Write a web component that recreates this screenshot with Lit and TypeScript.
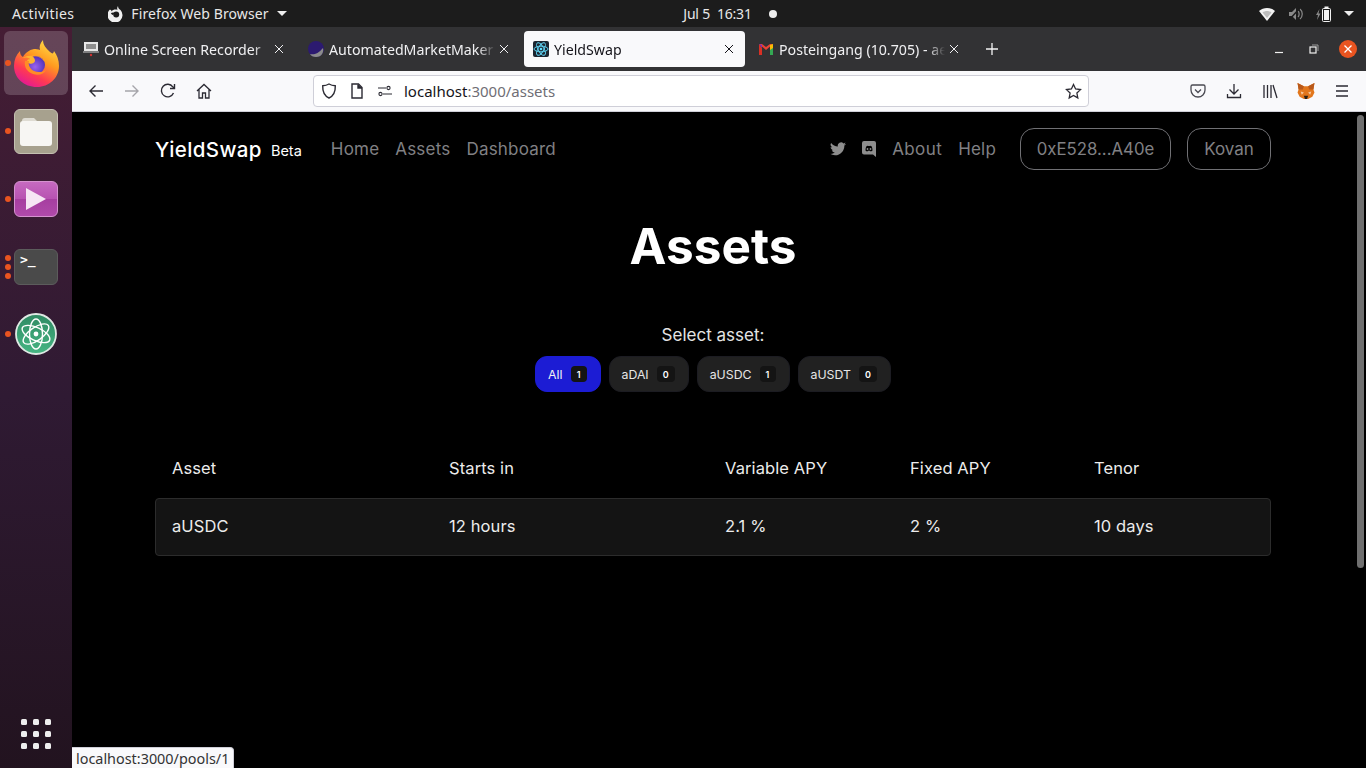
import {LitElement, html, css, svg} from 'lit';
import {customElement} from 'lit/decorators.js';

const assetPills = [
  {label: 'All', count: 1, active: true},
  {label: 'aDAI', count: 0},
  {label: 'aUSDC', count: 1},
  {label: 'aUSDT', count: 0},
];

const columns = ['Asset', 'Starts in', 'Variable APY', 'Fixed APY', 'Tenor'];
const row = ['aUSDC', '12 hours', '2.1 %', '2 %', '10 days'];

const closeIcon = html`<svg class="tab-close" width="10" height="10" viewBox="0 0 10 10"><path d="M1 1l8 8M9 1l-8 8" stroke="currentColor" stroke-width="1" fill="none"/></svg>`;

const firefoxLogo = svg`
  <defs>
    <linearGradient id="ffa" x1="0.8" y1="0" x2="0.25" y2="1"><stop offset="0" stop-color="#ffe14a"/><stop offset="0.4" stop-color="#ff9a1f"/><stop offset="0.72" stop-color="#ff3a52"/><stop offset="1" stop-color="#e0169a"/></linearGradient>
    <radialGradient id="ffb" cx="0.45" cy="0.6" r="0.65"><stop offset="0" stop-color="#9a63ee"/><stop offset="1" stop-color="#4a2cb0"/></radialGradient>
  </defs>
  <path d="M30 0c0 5 3 8 7 12 2 1 3 3 4-1 3 4 5 9 5 15 0 12-10 21-22 21C11 47 1 38 1 26c0-6 2-11 6-15 0 3 1 5 3 6 2-4 6-7 11-8 2 0 4 0 6 1-1-3 0-7 3-10z" fill="url(#ffa)"/>
  <circle cx="23" cy="25" r="9" fill="url(#ffb)"/>
  <path d="M6 20c4-3 8-3 11-1-2 0-3 1-3 3 3 3 7 2 8-1 0-2-1-4-3-5 6-1 11 2 13 7-2-4-6-7-11-7-6-1-11 1-15 4z" fill="#ffb52e"/>
  <path d="M12 21c-1 6 2 11 8 13 6 2 11 0 13-4-3 2-8 3-12 1-4-2-6-6-5-10z" fill="#ff8c26"/>
`;

const atomLines = svg`
  <g fill="none" stroke="#fff" stroke-width="1.4">
    <ellipse cx="21" cy="21" rx="15" ry="6.500" transform="rotate(25 21 21)"/>
    <ellipse cx="21" cy="21" rx="15" ry="6.500" transform="rotate(-35 21 21)"/>
    <ellipse cx="21" cy="21" rx="15" ry="6.500" transform="rotate(90 21 21)"/>
  </g>
  <circle cx="21" cy="21" r="2.400" fill="#fff"/>
`;

@customElement('app-root')
export class AppRoot extends LitElement {
  static styles = css`
    :host {
      display: block;
      width: 1366px;
      height: 768px;
      overflow: hidden;
      position: relative;
      font-family: "Noto Sans", "Open Sans", sans-serif;
      background: #000;
    }

    /* Ubuntu top bar */

    .topbar {
      height: 27px;
      background: #1c1c1c;
      color: #e8e8e8;
      font-size: 14px;
      display: grid;
      grid-template-columns: 1fr auto 1fr;
      align-items: center;
      padding: 0 12px;
      box-sizing: border-box;
    }

    .topbar-left, .topbar-right {
      display: flex;
      align-items: center;
    }

    .topbar-right {
      justify-content: flex-end;
      gap: 12px;
    }

    .activities {
      letter-spacing: 0.4px;
    }

    .app-menu {
      display: flex;
      align-items: center;
      gap: 7px;
      margin-left: 34px;
      letter-spacing: 0.1px;
    }

    .caret {
      width: 0;
      height: 0;
      border-left: 5px solid transparent;
      border-right: 5px solid transparent;
      border-top: 5px solid #eee;
      margin-left: 1px;
    }

    .clock {
      display: flex;
      align-items: center;
      gap: 17px;
      letter-spacing: -0.2px;
      margin-left: 94px;
    }

    .clock i {
      width: 8px;
      height: 8px;
      border-radius: 50%;
      background: #eee;
    }

    .shell {
      display: flex;
      height: 741px;
    }

    /* Dock */

    .dock {
      width: 72px;
      flex: none;
      background: linear-gradient(180deg, #451d34 0%, #2f1a33 50%, #22131f 100%);
      display: flex;
      flex-direction: column;
      align-items: center;
      padding-top: 4px;
      box-sizing: border-box;
    }

    .dock-item {
      width: 64px;
      height: 64px;
      display: flex;
      align-items: center;
      justify-content: center;
      position: relative;
      border-radius: 6px;
      margin-bottom: 4px;
    }

    .dock-item.current {
      background: rgba(255, 255, 255, 0.18);
    }

    .dock-files {
      height: 50px;
      margin: 7px 0 12px;
    }

    .dock-video {
      height: 36px;
      margin: 13px 0 16px;
    }

    .dock-terminal {
      height: 36px;
      margin: 16px 0 0;
    }

    .dock-atom {
      height: 44px;
      margin: 27px 0 0;
    }

    .pips {
      position: absolute;
      left: 1px;
      top: 50%;
      transform: translateY(-50%);
      display: flex;
      flex-direction: column;
      gap: 3px;
    }

    .pips i {
      width: 6px;
      height: 6px;
      border-radius: 50%;
      background: #e95420;
    }

    .app-tile {
      width: 44px;
      border-radius: 6px;
      position: relative;
      box-sizing: border-box;
    }

    .files {
      height: 45px;
      background: #a7a18e;
      display: flex;
      align-items: center;
      justify-content: center;
      border: 1px solid #c4c0b1;
    }

    .video {
      height: 36px;
      background: linear-gradient(180deg, #c66ac0 0%, #b752b1 50%, #a63ea0 50%, #b04aaa 100%);
      border: 1px solid #d592cf;
      display: flex;
      align-items: center;
      justify-content: center;
    }

    .terminal {
      height: 36px;
      background: #4a4a4a;
      border: 1px solid #5c5c5c;
      color: #fff;
      font: 700 13px/1 "DejaVu Sans Mono", monospace;
      padding: 3px 0 0 5px;
    }

    .dock-grid {
      margin-top: auto;
      margin-bottom: 19px;
      display: grid;
      grid-template-columns: repeat(3, 6px);
      gap: 6px;
    }

    .dock-grid i {
      width: 6px;
      height: 6px;
      border-radius: 1.500px;
      background: #eee;
    }

    /* Firefox window */

    .browser {
      flex: 1;
      min-width: 0;
      display: flex;
      flex-direction: column;
      position: relative;
    }

    .tabbar {
      height: 44px;
      background: #323234;
      display: flex;
      align-items: center;
      flex: none;
    }

    .tab {
      width: 225px;
      height: 36px;
      flex: none;
      display: flex;
      align-items: center;
      padding: 0 13px 0 11px;
      box-sizing: border-box;
      color: #f0f0f2;
      font-size: 14.200px;
    }

    .tab.active {
      width: 221px;
      margin: 0 2px;
      padding: 0 11px 0 9px;
      background: #f9f9fb;
      color: #15141a;
      border-radius: 4px;
    }

    .favicon {
      width: 16px;
      height: 16px;
      flex: none;
      margin-right: 5px;
    }

    .tab-label {
      flex: 1;
      min-width: 0;
      white-space: nowrap;
      overflow: hidden;
      -webkit-mask-image: linear-gradient(90deg, #000 90%, transparent);
      mask-image: linear-gradient(90deg, #000 90%, transparent);
    }

    .tab-close {
      flex: none;
      margin-left: 4px;
    }

    .new-tab {
      margin-left: 13px;
      color: #f4f4f4;
    }

    .window-controls {
      margin-left: auto;
      display: flex;
      align-items: center;
      color: #f0f0f0;
    }

    .window-controls > * {
      width: 35px;
      display: flex;
      justify-content: center;
      align-items: center;
    }

    .window-controls .win-close {
      width: 18px;
      height: 18px;
      border-radius: 50%;
      background: #e95420;
      margin: 0 9px 0 8px;
    }

    .toolbar {
      height: 41px;
      flex: none;
      box-sizing: border-box;
      background: #f9f9fb;
      border-bottom: 1px solid #cfcfd8;
      display: flex;
      align-items: center;
      color: #2b2a33;
      padding-left: 6px;
    }

    .tool {
      width: 36px;
      height: 32px;
      flex: none;
      display: flex;
      align-items: center;
      justify-content: center;
    }

    .tool.disabled {
      opacity: 0.4;
    }

    .urlbar {
      width: 776px;
      height: 32px;
      flex: none;
      margin-left: 91px;
      box-sizing: border-box;
      background: #fff;
      border: 1px solid #cfcfd8;
      border-radius: 4px;
      display: flex;
      align-items: center;
      padding: 0 6px 0 7px;
      gap: 12px;
    }

    .url-text {
      flex: 1;
      font-size: 15px;
      color: #15141a;
      margin-left: -1px;
    }

    .url-text span {
      color: #6f6e75;
    }

    .tool-group {
      display: flex;
      margin-left: 91px;
    }

    /* Page inside the browser */

    .page {
      flex: 1;
      min-height: 0;
      background: #000;
      color: #fff;
      font-family: Inter, "Noto Sans", sans-serif;
      padding: 16px 95px 0 83px;
      position: relative;
    }

    .scrollbar {
      position: absolute;
      top: 0;
      right: 0;
      bottom: 0;
      width: 10px;
    }

    .scrollbar i {
      position: absolute;
      top: 3px;
      left: 1px;
      width: 7px;
      height: 453px;
      border-radius: 4px;
      background: #6f6f6f;
    }

    nav {
      display: flex;
      align-items: center;
      height: 42px;
      font-size: 17px;
      color: #808084;
    }

    .logo {
      font-size: 20.500px;
      font-weight: 500;
      color: #fff;
      letter-spacing: 0.4px;
    }

    .beta {
      font-size: 14.500px;
      color: #fff;
      margin-left: 9px;
      margin-top: 3px;
    }

    .nav-links {
      display: flex;
      gap: 16px;
      margin-left: 29px;
      letter-spacing: 0.2px;
    }

    .nav-right {
      margin-left: auto;
      display: flex;
      align-items: center;
    }

    .nav-right svg {
      display: block;
    }

    .discord {
      margin-left: 16px;
    }

    .nav-about {
      margin-left: 16px;
      letter-spacing: 0.4px;
    }

    .nav-help {
      margin-left: 16px;
      margin-right: 24px;
      letter-spacing: 0.2px;
    }

    .outline-btn {
      height: 42px;
      box-sizing: border-box;
      border: 1px solid #707074;
      border-radius: 14px;
      display: flex;
      align-items: center;
      justify-content: center;
      color: #808084;
    }

    .wallet {
      width: 151px;
      margin-right: 16px;
      font-size: 16.800px;
    }

    .network {
      width: 84px;
    }

    h1 {
      margin: 43px 0 0;
      font-size: 49.500px;
      line-height: 66px;
      font-weight: 700;
      text-align: center;
    }

    .select-label {
      margin-top: 44px;
      text-align: center;
      font-size: 17px;
      line-height: 24px;
      color: #e4e4e4;
    }

    .pills {
      margin-top: 9px;
      display: flex;
      justify-content: center;
      gap: 8px;
    }

    .pill {
      height: 36px;
      box-sizing: border-box;
      padding: 0 13px 0 12px;
      display: flex;
      align-items: center;
      gap: 8px;
      border-radius: 12px;
      background: #212121;
      border: 1px solid #1c1c22;
      font-size: 12.300px;
      color: #e6e6e6;
    }

    .pill.active {
      background: #1c1cd4;
      border-color: #1c1cd4;
      color: #f2f2f2;
    }

    .count {
      min-width: 16px;
      height: 16px;
      box-sizing: border-box;
      border-radius: 4px;
      background: #141414;
      color: #fff;
      font-size: 9px;
      font-weight: 600;
      display: flex;
      align-items: center;
      justify-content: center;
    }

    .count.zero {
      min-width: 18px;
    }

    .table-row {
      display: grid;
      grid-template-columns: 277px 276px 185px 184px 1fr;
      padding-left: 17px;
      font-size: 16.500px;
      letter-spacing: 0.1px;
      color: #ececec;
    }

    .table-head {
      margin: 52px 0 6px;
      height: 48px;
      align-items: center;
    }

    .table-body {
      height: 58px;
      align-items: center;
      box-sizing: border-box;
      padding: 0 0 2px 16px;
      background: #141414;
      border: 1px solid #2c2c2c;
      border-radius: 4px;
    }

    /* Link preview in the corner */

    .status {
      position: absolute;
      left: 0;
      bottom: 0;
      height: 21px;
      width: 162px;
      box-sizing: border-box;
      padding: 1px 0 0 4px;
      background: #f9f9fb;
      border: 1px solid #cfcfd8;
      border-width: 1px 1px 0 0;
      border-top-right-radius: 4px;
      color: #333;
      font-size: 14.400px;
      line-height: 19px;
      white-space: nowrap;
      overflow: hidden;
    }
  `;

  renderTopbar() {
    return html`
      <div class="topbar">
        <div class="topbar-left">
          <span class="activities">Activities</span>
          <span class="app-menu">
            <svg width="16" height="16" viewBox="0 0 16 16"><path d="M10 0c0 2 1 3 2.500 4A7.500 7.500 0 1 1 2 3.500c1 .5 1.500 1 1.500 2C5 3.500 7.500 3 9.500 4 9 3 9 1.500 10 0z" fill="#f0f0f0"/><circle cx="8.200" cy="8.500" r="3" fill="#1c1c1c"/><path d="M3 7c2-1 3-.5 4 .5-1 0-2 .5-2 1.500-1-.2-2-1-2-2z" fill="#1c1c1c"/></svg>
            <span>Firefox Web Browser</span>
            <i class="caret"></i>
          </span>
        </div>
        <div class="clock"><span>Jul 5&nbsp; 16:31</span><i></i></div>
        <div class="topbar-right">
          <svg width="18" height="14" viewBox="0 0 18 14"><path d="M1 4c4.500-4 11.500-4 16 0l-8 10z" fill="#f2f2f2"/><path d="M4.500 5.500c2.500-2 6.500-2 9 0L9 11z" fill="#1c1c1c" opacity="0.25"/></svg>
          <svg width="16" height="16" viewBox="0 0 16 16"><path d="M1 6h3l4-4v12l-4-4H1z" fill="#8a8a8a"/><path d="M10 5c1.500 1.500 1.500 4.500 0 6M12 3c3 2.500 3 7.500 0 10" stroke="#8a8a8a" fill="none" stroke-width="1.200"/><path d="M1 14L12 2" stroke="#1c1c1c" stroke-width="1.500"/></svg>
          <svg width="15" height="16" viewBox="0 0 15 16"><path d="M3.500 3L0 9h2l-1 5 3.500-6.500H2.500z" fill="#8a8a8a"/><rect x="6.500" y="2.500" width="8" height="13" rx="1" fill="#1c1c1c" stroke="#f2f2f2"/><rect x="8" y="4" width="5" height="10" fill="#f2f2f2"/><rect x="8.500" y="0.500" width="4" height="2" fill="#f2f2f2"/></svg>
          <i class="caret"></i>
        </div>
      </div>
    `;
  }

  renderDock() {
    const pips = (n: number) => html`<div class="pips">${Array.from({length: n}, () => html`<i></i>`)}</div>`;
    return html`
      <aside class="dock">
        <div class="dock-item current">
          ${pips(1)}
          <svg width="47" height="47" viewBox="0 0 47 47">${firefoxLogo}</svg>
        </div>
        <div class="dock-item dock-files">
          ${pips(1)}
          <div class="app-tile files">
            <svg width="32" height="30" viewBox="0 0 32 30"><path d="M2 5a3 3 0 0 1 3-3h9l4 4H2z" fill="#dedbd2"/><rect x="0" y="5" width="32" height="25" rx="3" fill="#f7f6f3"/></svg>
          </div>
        </div>
        <div class="dock-item dock-video">
          ${pips(1)}
          <div class="app-tile video">
            <svg width="22" height="24" viewBox="0 0 22 24"><path d="M1 1l20 11L1 23z" fill="#f6e6f4"/></svg>
          </div>
        </div>
        <div class="dock-item dock-terminal">
          ${pips(3)}
          <div class="app-tile terminal">&gt;_</div>
        </div>
        <div class="dock-item dock-atom">
          ${pips(1)}
          <svg width="42" height="42" viewBox="0 0 42 42">
            <defs><linearGradient id="atomBg" x1="0" y1="0" x2="0" y2="1"><stop offset="0" stop-color="#2f8a63"/><stop offset="1" stop-color="#46b583"/></linearGradient></defs>
            <circle cx="21" cy="21" r="20" fill="url(#atomBg)" stroke="#dfe9e4" stroke-width="1.800"/>
            ${atomLines}
          </svg>
        </div>
        <div class="dock-grid">${Array.from({length: 9}, () => html`<i></i>`)}</div>
      </aside>
    `;
  }

  renderTabs() {
    return html`
      <div class="tabbar">
        <div class="tab">
          <svg class="favicon" viewBox="0 0 16 16"><rect x="1" y="1" width="14" height="9" fill="#e8e8e8"/><rect x="3" y="3" width="10" height="5" fill="#8e8e8e"/><path d="M0 11h16" stroke="#ccc"/><circle cx="8" cy="14" r="1.200" fill="#c33"/></svg>
          <span class="tab-label">Online Screen Recorder</span>
          ${closeIcon}
        </div>
        <div class="tab">
          <svg class="favicon" viewBox="0 0 16 16"><circle cx="8" cy="8" r="8" fill="#2c1a70"/><path d="M2 13c4 1 8 0 13-6 1 4-1 9-7 9-3 0-5-1-6-3z" fill="#8c8c8c"/></svg>
          <span class="tab-label">AutomatedMarketMaker</span>
          ${closeIcon}
        </div>
        <div class="tab active">
          <svg class="favicon" viewBox="0 0 16 16"><rect width="16" height="16" rx="2" fill="#1c2530"/><g fill="none" stroke="#61dafb" stroke-width="0.900"><ellipse cx="8" cy="8" rx="7" ry="2.800"/><ellipse cx="8" cy="8" rx="7" ry="2.800" transform="rotate(60 8 8)"/><ellipse cx="8" cy="8" rx="7" ry="2.800" transform="rotate(120 8 8)"/></g><circle cx="8" cy="8" r="1.300" fill="#61dafb"/></svg>
          <span class="tab-label">YieldSwap</span>
          ${closeIcon}
        </div>
        <div class="tab">
          <svg class="favicon" viewBox="0 0 16 16"><path d="M1 3v11h3V7z" fill="#d93025"/><path d="M15 3v11h-3V7z" fill="#34a853"/><path d="M1 3l7 6 7-6-3 0-4 3-4-3z" fill="#ea4335"/><path d="M12 4l3-1v4l-3 2z" fill="#fbbc04"/><path d="M1 3l3 1v3z" fill="#7b2fbf"/></svg>
          <span class="tab-label">Posteingang (10.705) - ae</span>
          ${closeIcon}
        </div>
        <svg class="new-tab" width="14" height="14" viewBox="0 0 14 14"><path d="M7 1v12M1 7h12" stroke="currentColor" stroke-width="1.300" fill="none"/></svg>
        <div class="window-controls">
          <span><svg width="10" height="10" viewBox="0 0 10 10"><path d="M1 8.500h8" stroke="currentColor" stroke-width="1.200"/></svg></span>
          <span><svg width="10" height="10" viewBox="0 0 10 10"><rect x="1" y="3" width="6" height="6" fill="none" stroke="currentColor" stroke-width="1.200"/><path d="M3 1h6v6" fill="none" stroke="#9a9a9a"/></svg></span>
          <span class="win-close"><svg width="10" height="10" viewBox="0 0 10 10"><path d="M1.500 1.500l7 7M8.500 1.500l-7 7" stroke="#fff" stroke-width="1.300"/></svg></span>
        </div>
      </div>
    `;
  }

  renderToolbar() {
    return html`
      <div class="toolbar">
        <span class="tool"><svg width="16" height="16" viewBox="0 0 16 16" fill="none" stroke="currentColor" stroke-width="1.400"><path d="M15 8H2M7.500 2.500L2 8l5.500 5.500"/></svg></span>
        <span class="tool disabled"><svg width="16" height="16" viewBox="0 0 16 16" fill="none" stroke="currentColor" stroke-width="1.400"><path d="M1 8h13M8.500 2.500L14 8l-5.500 5.500"/></svg></span>
        <span class="tool"><svg width="16" height="16" viewBox="0 0 16 16" fill="none" stroke="currentColor" stroke-width="1.400"><path d="M13.500 10A6.300 6.300 0 1 1 12.800 3.800L14.500 5.500"/><path d="M14.500 1v4.500H10"/></svg></span>
        <span class="tool"><svg width="16" height="16" viewBox="0 0 16 16" fill="none" stroke="currentColor" stroke-width="1.300"><path d="M1 8l7-6.500L15 8M3 6.500V15h3.500v-5h3v5H13V6.500"/></svg></span>
        <div class="urlbar">
          <svg width="16" height="16" viewBox="0 0 16 16" fill="none" stroke="currentColor" stroke-width="1.400"><path d="M8 1c2 1.200 4 1.700 6.300 1.800C14.500 8.500 12.500 13 8 15 3.500 13 1.500 8.500 1.700 2.800 4 2.700 6 2.200 8 1z"/></svg>
          <svg width="16" height="16" viewBox="0 0 16 16" fill="none" stroke="currentColor" stroke-width="1.400"><path d="M3 1h6.500L13 4.500V15H3z"/><path d="M9 1.500V5h4" fill="currentColor"/></svg>
          <svg width="16" height="16" viewBox="0 0 16 16" fill="none" stroke="currentColor" stroke-width="1.100"><circle cx="11.500" cy="5" r="1.600"/><circle cx="3.500" cy="11" r="1.600"/><path d="M1 5h8M6 11h9"/></svg>
          <span class="url-text">localhost<span>:3000/assets</span></span>
          <svg width="17" height="17" viewBox="0 0 17 17" fill="none" stroke="currentColor" stroke-width="1.300"><path d="M8.500 1.500l2.100 4.500 4.900.6-3.600 3.400.9 4.900-4.300-2.400-4.300 2.400.9-4.900L1.500 6.600l4.900-.6z"/></svg>
        </div>
        <div class="tool-group">
          <span class="tool"><svg width="16" height="16" viewBox="0 0 16 16" fill="none" stroke="#4a4a52" stroke-width="1.300"><path d="M2.500 2h11A1.500 1.500 0 0 1 15 3.500V7a7 7 0 0 1-14 0V3.500A1.500 1.500 0 0 1 2.500 2z"/><path d="M5 6.500l3 3 3-3"/></svg></span>
          <span class="tool"><svg width="16" height="16" viewBox="0 0 16 16" fill="none" stroke="currentColor" stroke-width="1.300"><path d="M8 1v10M3.500 6.500L8 11l4.500-4.500M1.500 11v3.500h13V11"/></svg></span>
          <span class="tool"><svg width="16" height="16" viewBox="0 0 16 16" fill="none" stroke="currentColor" stroke-width="1.300"><path d="M2 2v13M5.500 2v13M9 2v13M11 2l4 13"/></svg></span>
          <span class="tool"><svg width="20" height="18" viewBox="0 0 18 17"><path d="M1 1l6 3h4l6-3-1 6 1 3-2 4-4 2H7l-4-2-2-4 1-3z" fill="#e2761b"/><path d="M1 1l6 3-1 3-4 0zM17 1l-6 3 1 3 4 0z" fill="#b9591a"/><path d="M4 9l3 1-2 2zM14 9l-3 1 2 2z" fill="#f7c9a0"/><path d="M7 13h4l-1 3H8z" fill="#2b2014"/></svg></span>
          <span class="tool"><svg width="16" height="16" viewBox="0 0 16 16" stroke="currentColor" stroke-width="1.300"><path d="M2 3h12M2 8h12M2 13h12"/></svg></span>
        </div>
      </div>
    `;
  }

  renderPage() {
    return html`
      <main class="page">
        <nav>
          <span class="logo">YieldSwap</span>
          <span class="beta">Beta</span>
          <div class="nav-links"><span>Home</span><span>Assets</span><span>Dashboard</span></div>
          <div class="nav-right">
            <svg width="16" height="14" viewBox="0 0 24 20" fill="#8d8d8d"><path d="M24 2.400a10 10 0 0 1-2.800.8A5 5 0 0 0 23.300.4a9.800 9.800 0 0 1-3.100 1.200 4.900 4.900 0 0 0-8.400 4.500A14 14 0 0 1 1.700.9a4.900 4.900 0 0 0 1.500 6.600 4.900 4.900 0 0 1-2.200-.6c0 2.400 1.700 4.400 3.900 4.900a4.900 4.900 0 0 1-2.200.1 4.900 4.900 0 0 0 4.600 3.400A9.900 9.900 0 0 1 0 17.300 14 14 0 0 0 7.500 19.500c9.100 0 14.300-7.700 14-14.600A10 10 0 0 0 24 2.400z"/></svg>
            <svg class="discord" width="14" height="16" viewBox="0 0 14 16"><path d="M2 0h10a2 2 0 0 1 2 2v14l-3-2.500H2a2 2 0 0 1-2-2V2a2 2 0 0 1 2-2z" fill="#8d8d8d"/><path d="M3.500 9.500c0-2.500.7-4 1.300-4.500l1.200-.3.200.4h1.600l.2-.4 1.200.3c.6.500 1.300 2 1.300 4.500-.7.700-1.500.9-2 .9l-.4-.6H5.900l-.4.6c-.5 0-1.300-.2-2-.9z" fill="#000"/><circle cx="5.500" cy="8" r=".9" fill="#8d8d8d"/><circle cx="8.500" cy="8" r=".9" fill="#8d8d8d"/></svg>
            <span class="nav-about">About</span>
            <span class="nav-help">Help</span>
            <div class="outline-btn wallet">0xE528...A40e</div>
            <div class="outline-btn network">Kovan</div>
          </div>
        </nav>
        <h1>Assets</h1>
        <div class="select-label">Select asset:</div>
        <div class="pills">
          ${assetPills.map(
            (p) => html`<div class="pill ${p.active ? 'active' : ''}"><span>${p.label}</span><span class="count ${p.count === 0 ? 'zero' : ''}">${p.count}</span></div>`
          )}
        </div>
        <div class="table-row table-head">${columns.map((c) => html`<span>${c}</span>`)}</div>
        <div class="table-row table-body">${row.map((c) => html`<span>${c}</span>`)}</div>
        <div class="scrollbar"><i></i></div>
      </main>
      <div class="status">localhost:3000/pools/1</div>
    `;
  }

  render() {
    return html`
      ${this.renderTopbar()}
      <div class="shell">
        ${this.renderDock()}
        <section class="browser">
          ${this.renderTabs()}
          ${this.renderToolbar()}
          ${this.renderPage()}
        </section>
      </div>
    `;
  }
}
